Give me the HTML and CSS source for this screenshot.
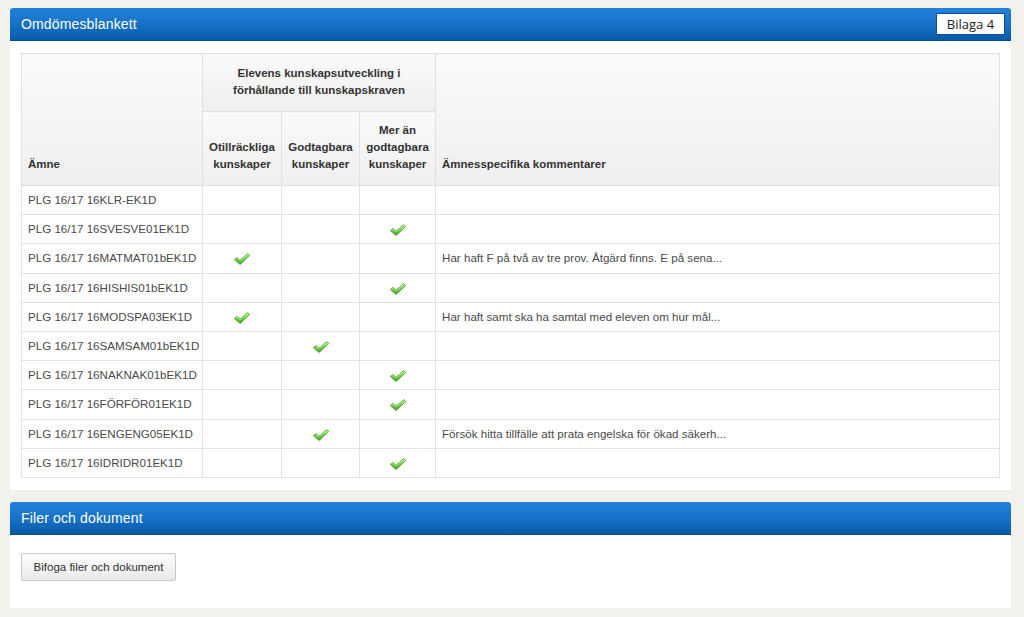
FILE: index.html
```html
<!DOCTYPE html>
<html lang="sv">
<head>
<meta charset="utf-8">
<title>Omdömesblankett</title>
<link rel="stylesheet" href="styles.css">
</head>
<body>
<svg width="0" height="0" class="defs">
  <defs>
    <linearGradient id="chk" x1="0" y1="0" x2="0" y2="1">
      <stop offset="0" stop-color="#b6f08a"/>
      <stop offset="0.5" stop-color="#6cd043"/>
      <stop offset="1" stop-color="#3c9e24"/>
    </linearGradient>
    <symbol id="check" viewBox="0 0 18 14">
      <path d="M1.2 7.6 L4 5.4 L7 8.2 L14.6 1.6 L16.8 3.4 L7.2 12.6 Z" fill="url(#chk)" stroke="#4b9a2c" stroke-width="0.7" stroke-linejoin="round"/>
      <path d="M2.6 7.4 L4 6.4 L7 9.0 L14.6 2.6" fill="none" stroke="#e4ffd0" stroke-width="0.6" opacity="0.7"/>
    </symbol>
  </defs>
</svg>

<section class="panel first">
  <header class="panel-head">
    <h2>Omdömesblankett</h2>
    <span class="tag">Bilaga 4</span>
  </header>
  <div class="panel-body">
    <table class="grade">
      <colgroup>
        <col class="c-subj"><col class="c-g1"><col class="c-g2"><col class="c-g3"><col class="c-com">
      </colgroup>
      <thead>
        <tr>
          <th rowspan="2" class="left">Ämne</th>
          <th colspan="3" class="group">Elevens kunskapsutveckling i<br>förhållande till kunskapskraven</th>
          <th rowspan="2" class="left">Ämnesspecifika kommentarer</th>
        </tr>
        <tr>
          <th>Otillräckliga<br>kunskaper</th>
          <th>Godtagbara<br>kunskaper</th>
          <th>Mer än<br>godtagbara<br>kunskaper</th>
        </tr>
      </thead>
      <tbody>
        <tr><td>PLG 16/17 16KLR-EK1D</td><td></td><td></td><td></td><td></td></tr>
        <tr><td>PLG 16/17 16SVESVE01EK1D</td><td></td><td></td><td class="mk"><svg class="ck"><use href="#check"/></svg></td><td></td></tr>
        <tr><td>PLG 16/17 16MATMAT01bEK1D</td><td class="mk"><svg class="ck"><use href="#check"/></svg></td><td></td><td></td><td>Har haft F på två av tre prov. Åtgärd finns. E på sena...</td></tr>
        <tr><td>PLG 16/17 16HISHIS01bEK1D</td><td></td><td></td><td class="mk"><svg class="ck"><use href="#check"/></svg></td><td></td></tr>
        <tr><td>PLG 16/17 16MODSPA03EK1D</td><td class="mk"><svg class="ck"><use href="#check"/></svg></td><td></td><td></td><td>Har haft samt ska ha samtal med eleven om hur mål...</td></tr>
        <tr><td>PLG 16/17 16SAMSAM01bEK1D</td><td></td><td class="mk"><svg class="ck"><use href="#check"/></svg></td><td></td><td></td></tr>
        <tr><td>PLG 16/17 16NAKNAK01bEK1D</td><td></td><td></td><td class="mk"><svg class="ck"><use href="#check"/></svg></td><td></td></tr>
        <tr><td>PLG 16/17 16FÖRFÖR01EK1D</td><td></td><td></td><td class="mk"><svg class="ck"><use href="#check"/></svg></td><td></td></tr>
        <tr><td>PLG 16/17 16ENGENG05EK1D</td><td></td><td class="mk"><svg class="ck"><use href="#check"/></svg></td><td></td><td>Försök hitta tillfälle att prata engelska för ökad säkerh...</td></tr>
        <tr><td>PLG 16/17 16IDRIDR01EK1D</td><td></td><td></td><td class="mk"><svg class="ck"><use href="#check"/></svg></td><td></td></tr>
      </tbody>
    </table>
  </div>
</section>

<section class="panel second">
  <header class="panel-head">
    <h2>Filer och dokument</h2>
  </header>
  <div class="panel-body files">
    <button class="btn" type="button">Bifoga filer och dokument</button>
  </div>
</section>
</body>
</html>
```

FILE: styles.css
```css
* { box-sizing: border-box; }

html, body { margin: 0; padding: 0; }

body {
  background: #f3f1ec;
  font-family: "Liberation Sans", Arial, sans-serif;
  color: #444;
  padding: 8px 0 0 10px;
}

.defs { position: absolute; width: 0; height: 0; overflow: hidden; }

.panel {
  width: 1001px;
  background: #fff;
}

.panel.second { margin-top: 12px; }

.panel-head {
  height: 33px;
  display: flex;
  align-items: center;
  justify-content: space-between;
  padding: 0 6px 0 11px;
  background: linear-gradient(to bottom, #2182dc 0%, #1570c6 55%, #0a5aa8 100%);
  border-radius: 3px 3px 0 0;
  border-bottom: 1px solid #0a4d8f;
}

.panel-head h2 {
  margin: 0;
  font-size: 14px;
  font-weight: normal;
  color: #fff;
  letter-spacing: 0.15px;
}

.tag {
  width: 69px;
  height: 22px;
  background: #fff;
  border: 1px solid #0b4f92;
  color: #222;
  font-family: "Open Sans", "Liberation Sans", sans-serif;
  font-size: 13px;
  display: flex;
  align-items: center;
  justify-content: center;
}

.panel-body {
  padding: 12px 12px 12px 11px;
}

.grade {
  width: 978px;
  border-collapse: collapse;
  table-layout: fixed;
  font-size: 12px;
}

.c-subj { width: 181px; }
.c-g1 { width: 79px; }
.c-g2 { width: 78px; }
.c-g3 { width: 76px; }
.c-com { width: 564px; }

.grade th {
  background: linear-gradient(to bottom, #fafafa, #efefef);
  border: 1px solid #e0e0e0;
  color: #333;
  font-weight: bold;
  line-height: 17px;
  text-align: center;
  vertical-align: bottom;
  padding: 0 4px 12px;
  font-size: 11.5px;
}

.grade th.left {
  text-align: left;
  padding-left: 6px;
}

.grade th.group {
  height: 58px;
  vertical-align: middle;
  padding: 3px 4px 4px;
}

.grade thead tr:nth-child(2) th { height: 74px; }

.grade td {
  height: 29.2px;
  border: 1px solid #e3e3e3;
  padding: 0 6px;
  line-height: 16px;
  white-space: nowrap;
  overflow: hidden;
  color: #4a4a4a;
  font-size: 11.6px;
}

.grade td.mk {
  text-align: center;
  padding: 0;
}

.ck {
  width: 18px;
  height: 14px;
  display: inline-block;
  vertical-align: middle;
}

.files {
  padding: 18px 12px 27px 11px;
}

.btn {
  width: 155px;
  height: 28px;
  border: 1px solid #c8c8c8;
  border-radius: 2px;
  background: linear-gradient(to bottom, #fdfdfd, #e9e9e9);
  font-family: "Liberation Sans", Arial, sans-serif;
  font-size: 11.5px;
  color: #333;
  padding: 0;
}
```
